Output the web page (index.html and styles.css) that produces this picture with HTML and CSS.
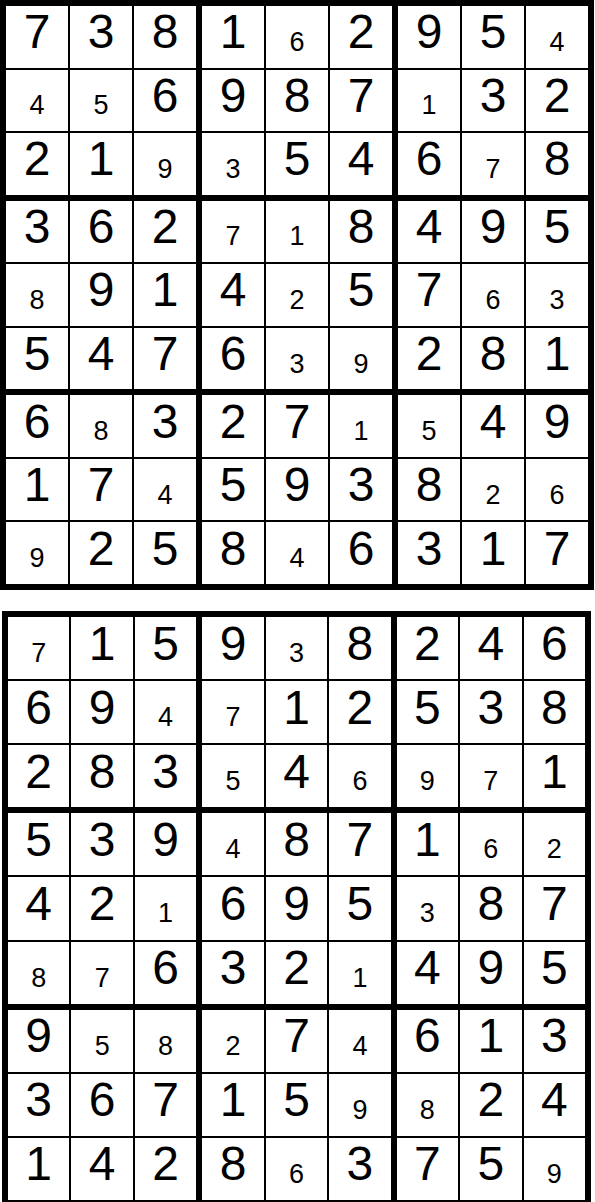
FILE: index.html
```html
<!DOCTYPE html>
<html lang="en">
<head>
  <meta charset="UTF-8" />
  <meta name="viewport" content="width=device-width, initial-scale=1.0" />
  <title>Sudoku</title>
  <link rel="stylesheet" href="styles.css">
</head>
<body>
  <div class="page">
    <div class="board board-top" id="board1"></div>
    <div class="board board-bottom" id="board2"></div>
  </div>

  <script>
    // "." before a digit = small (given) digit
    const puzzles = {
      board1: [
        "7381.6295.4",
        ".4.56987.132",
        "21.9.3546.78",
        "362.7.18495",
        ".8914.257.6.3",
        "5476.3.9281",
        "6.8327.1.549",
        "17.45938.2.6",
        ".9258.46317"
      ],
      board2: [
        ".7159.38246",
        "69.4.712538",
        "283.54.6.9.71",
        "539.4871.6.2",
        "42.1695.387",
        ".8.7632.1495",
        "9.5.8.27.4613",
        "36715.9.824",
        "1428.6375.9"
      ]
    };

    function parseRow(str) {
      const out = [];
      let small = false;
      for (const ch of str) {
        if (ch === '.') { small = true; continue; }
        out.push({ value: ch, small });
        small = false;
      }
      return out;
    }

    function renderBoard(id, rows) {
      const board = document.getElementById(id);
      const boxes = [];
      for (let i = 0; i < 9; i++) {
        const box = document.createElement('div');
        box.className = 'box';
        board.appendChild(box);
        boxes.push(box);
      }
      rows.forEach((line, r) => {
        parseRow(line).forEach((item, c) => {
          const cell = document.createElement('div');
          cell.className = 'cell ' + (item.small ? 'small' : 'big');
          cell.textContent = item.value;
          boxes[Math.floor(r / 3) * 3 + Math.floor(c / 3)].appendChild(cell);
        });
      });
    }

    renderBoard('board1', puzzles.board1);
    renderBoard('board2', puzzles.board2);
  </script>
</body>
</html>
```

FILE: styles.css
```css
html,
body {
  height: 1202px;
  overflow: hidden;
}

body {
  margin: 0;
  font-family: "Liberation Sans", Arial, sans-serif;
  background: white;
  color: black;
}

.page {
  display: flex;
  flex-direction: column;
  gap: 21px;
}

.board {
  display: grid;
  grid-template-columns: repeat(3, 1fr);
  grid-template-rows: repeat(3, 1fr);
  gap: 6px;
  padding: 6px;
  background: black;
  box-sizing: border-box;
  flex-shrink: 0;
}

.board-top {
  width: 594px;
  height: 590px;
}

.board-bottom {
  width: 589px;
  height: 595px;
  margin-left: 2px;
}

.box {
  display: grid;
  grid-template-columns: repeat(3, 1fr);
  grid-template-rows: repeat(3, 1fr);
  gap: 2px;
  min-width: 0;
  min-height: 0;
}

.cell {
  display: flex;
  align-items: center;
  justify-content: center;
  background: white;
  line-height: 1;
  box-sizing: border-box;
  min-width: 0;
  min-height: 0;
}

.big {
  font-size: 48px;
  padding-bottom: 9px;
}

.small {
  font-size: 27px;
  padding-top: 11px;
}
```
